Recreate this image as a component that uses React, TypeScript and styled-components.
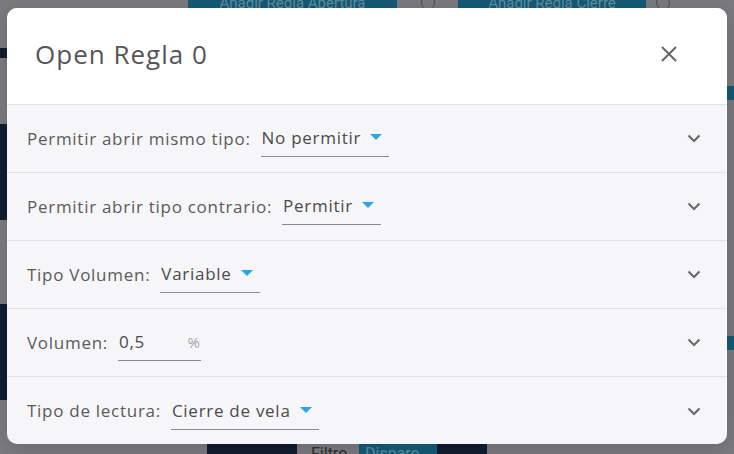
import React from "react";
import styled, { createGlobalStyle } from "styled-components";

const Global = createGlobalStyle`
  html, body { margin: 0; padding: 0; }
  body { width: 734px; height: 454px; overflow: hidden; background: #7b7a7e; font-family: "Open Sans", "Liberation Sans", sans-serif; }
  #root { width: 734px; height: 454px; }
`;

/* ---------- dimmed background page ---------- */
const Page = styled.div`
  position: relative;
  width: 734px;
  height: 454px;
  background: #7b7a7e;
  overflow: hidden;
  display: flex;
  flex-direction: column;
  justify-content: space-between;
`;

const TopStrip = styled.div`
  display: flex;
  align-items: flex-start;
  height: 14px;
  padding-left: 188px;
`;

const DimButton = styled.div<{ $w: number }>`
  width: ${(p) => p.$w}px;
  height: 14px;
  background: #155a75;
  color: #5f8ea2;
  font-family: "Roboto", sans-serif;
  font-size: 15px;
  line-height: 6px;
  text-align: center;
  white-space: nowrap;
  overflow: hidden;
`;

const DimGap = styled.div<{ $w: number }>`
  width: ${(p) => p.$w}px;
  height: 14px;
  display: flex;
  justify-content: center;
`;

const DimCircle = styled.div`
  width: 12px;
  height: 12px;
  margin-top: -4px;
  border: 1.5px solid #4e4d50;
  border-radius: 50%;
`;

const SideStrip = styled.div`
  position: absolute;
  left: 0;
  top: 0;
  width: 30px;
  height: 454px;
  display: flex;
  flex-direction: column;
`;

const SideBlock = styled.div<{ $h: number; $dark?: boolean }>`
  height: ${(p) => p.$h}px;
  background: ${(p) => (p.$dark ? "#121d31" : "transparent")};
`;

const RightAccent = styled.div`
  position: absolute;
  right: 0;
  width: 8px;
  height: 14px;
  background: #155a75;
`;

const BottomStrip = styled.div`
  display: flex;
  align-items: flex-end;
  height: 12px;
  padding-left: 207px;
  font-family: "Roboto", sans-serif;
  font-size: 16px;
`;

const DimNavy = styled.div<{ $w: number }>`
  width: ${(p) => p.$w}px;
  height: 10px;
  background: #111b2e;
`;

const DimPlain = styled.div<{ $w: number }>`
  width: ${(p) => p.$w}px;
  height: 10px;
  padding-left: 14px;
  box-sizing: border-box;
  color: #2c2c30;
  line-height: 20px;
  overflow: hidden;
  white-space: nowrap;
`;

const DimTeal = styled.div<{ $w: number }>`
  width: ${(p) => p.$w}px;
  height: 10px;
  padding-left: 6px;
  box-sizing: border-box;
  background: #155a75;
  color: #5f8ea2;
  line-height: 20px;
  overflow: hidden;
  white-space: nowrap;
`;

/* ---------- modal ---------- */
const Modal = styled.div`
  position: absolute;
  left: 7px;
  top: 8px;
  width: 720px;
  height: 436px;
  border-radius: 10px;
  overflow: hidden;
  background: #f6f6f8;
  display: flex;
  flex-direction: column;
  box-shadow: 0 4px 20px rgba(0, 0, 0, 0.15);
`;

const Header = styled.div`
  height: 97px;
  flex-shrink: 0;
  background: #ffffff;
  display: flex;
  align-items: center;
  justify-content: space-between;
  padding: 0 48px 0 28px;
  box-sizing: border-box;
  border-bottom: 1px solid #e2e2e6;
`;

const Title = styled.h2`
  margin: 0;
  margin-top: -4px;
  font-weight: 400;
  font-size: 26px;
  color: #555557;
  letter-spacing: 1px;
`;

const CloseButton = styled.button`
  border: none;
  background: none;
  padding: 0;
  margin-top: -4px;
  width: 20px;
  height: 20px;
  display: flex;
  align-items: center;
  justify-content: center;
  cursor: pointer;
`;

const Row = styled.div`
  height: 68px;
  flex-shrink: 0;
  display: flex;
  align-items: center;
  padding: 0 26px 0 20px;
  box-sizing: border-box;
  border-bottom: 1px solid #e2e2e6;
  &:last-child { border-bottom: none; }
`;

const Field = styled.div`
  flex: 1;
  display: flex;
  align-items: center;
  gap: 10px;
  font-size: 17px;
  line-height: 24px;
  color: #5a5a5c;
  letter-spacing: 0.72px;
`;

const Label = styled.span``;

const Select = styled.div`
  display: flex;
  align-items: center;
  padding: 6px 7px 6px 1px;
  border-bottom: 1px solid #8a8a8c;
  color: #4a4a4c;
`;

const SelectText = styled.span`
  margin-right: 9px;
`;

const Caret = styled.span`
  width: 0;
  height: 0;
  margin-top: -2px;
  border-left: 6px solid transparent;
  border-right: 6px solid transparent;
  border-top: 6px solid #2aa6e2;
`;

const Input = styled.div`
  width: 83px;
  box-sizing: border-box;
  display: flex;
  align-items: center;
  justify-content: space-between;
  padding: 6px 1px 6px 1px;
  border-bottom: 1px solid #8a8a8c;
  color: #4a4a4c;
`;

const Adornment = styled.span`
  color: #a4a4a8;
  font-size: 15px;
  letter-spacing: 0;
`;

const Chevron = styled.div`
  width: 14px;
  height: 14px;
  display: flex;
  align-items: center;
  justify-content: center;
`;

const ChevronIcon = () => (
  <svg width="14" height="9" viewBox="0 0 14 9">
    <path d="M1.5 1.5 L7 7 L12.5 1.5" fill="none" stroke="#6b6b6e" strokeWidth="2.2" />
  </svg>
);

const CloseIcon = () => (
  <svg width="18" height="18" viewBox="0 0 18 18">
    <path d="M2 2 L16 16 M16 2 L2 16" stroke="#666668" strokeWidth="2" />
  </svg>
);

type SelectRow = { label: string; value: string };

const selects: SelectRow[] = [
  { label: "Permitir abrir mismo tipo:", value: "No permitir" },
  { label: "Permitir abrir tipo contrario:", value: "Permitir" },
  { label: "Tipo Volumen:", value: "Variable" },
];

export default function App() {
  return (
    <Page>
      <Global />
      <TopStrip>
        <DimButton $w={209}>Añadir Regla Apertura</DimButton>
        <DimGap $w={61}><DimCircle /></DimGap>
        <DimButton $w={188}>Añadir Regla Cierre</DimButton>
        <DimGap $w={34}><DimCircle /></DimGap>
      </TopStrip>
      <SideStrip>
        <SideBlock $h={48} />
        <SideBlock $h={10} $dark />
        <SideBlock $h={66} />
        <SideBlock $h={96} $dark />
        <SideBlock $h={84} />
        <SideBlock $h={96} $dark />
      </SideStrip>
      <RightAccent style={{ top: 86 }} />
      <RightAccent style={{ top: 336 }} />
      <BottomStrip>
        <DimNavy $w={90} />
        <DimPlain $w={62}>Filtro</DimPlain>
        <DimTeal $w={78}>Disparo</DimTeal>
        <DimNavy $w={50} />
      </BottomStrip>

      <Modal>
        <Header>
          <Title>Open Regla 0</Title>
          <CloseButton aria-label="close">
            <CloseIcon />
          </CloseButton>
        </Header>
        {selects.map((s) => (
          <Row key={s.label}>
            <Field>
              <Label>{s.label}</Label>
              <Select>
                <SelectText>{s.value}</SelectText>
                <Caret />
              </Select>
            </Field>
            <Chevron><ChevronIcon /></Chevron>
          </Row>
        ))}
        <Row>
          <Field>
            <Label>Volumen:</Label>
            <Input>
              <span>0,5</span>
              <Adornment>%</Adornment>
            </Input>
          </Field>
          <Chevron><ChevronIcon /></Chevron>
        </Row>
        <Row>
          <Field>
            <Label>Tipo de lectura:</Label>
            <Select>
              <SelectText>Cierre de vela</SelectText>
              <Caret />
            </Select>
          </Field>
          <Chevron><ChevronIcon /></Chevron>
        </Row>
      </Modal>
    </Page>
  );
}
